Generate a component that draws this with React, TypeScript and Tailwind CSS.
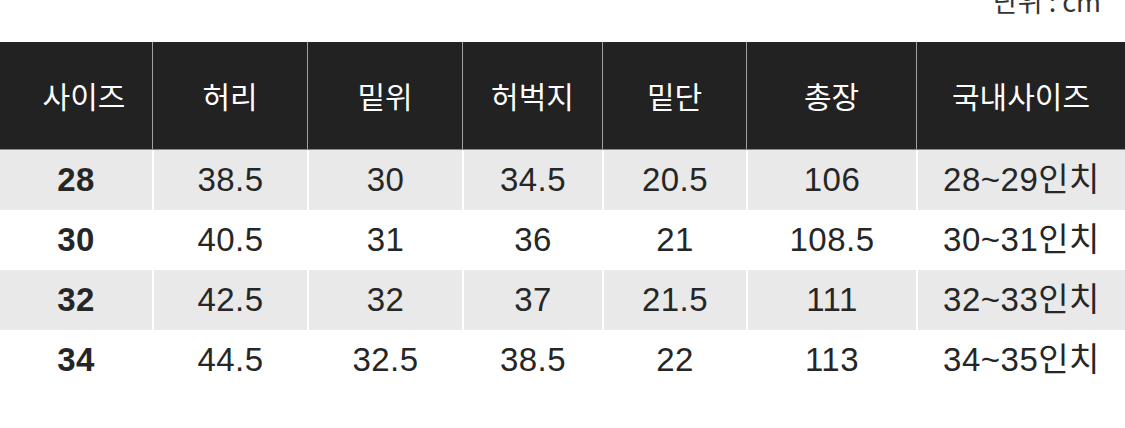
import React from "react";

const headers = ["사이즈", "허리", "밑위", "허벅지", "밑단", "총장", "국내사이즈"];
const rows = [
  ["28", "38.5", "30", "34.5", "20.5", "106", "28~29인치"],
  ["30", "40.5", "31", "36", "21", "108.5", "30~31인치"],
  ["32", "42.5", "32", "37", "21.5", "111", "32~33인치"],
  ["34", "44.5", "32.5", "38.5", "22", "113", "34~35인치"],
];

const grid = "grid grid-cols-[152px_155px_155px_140px_144px_170px_209px]";

export default function App() {
  return (
    <div
      className="w-[1125px] h-[428px] bg-white overflow-hidden"
      style={{ fontFamily: '"Liberation Sans", "Noto Sans CJK KR", sans-serif' }}
    >
      <div className="h-[42px] overflow-hidden flex justify-end pr-[24px]">
        <span
          className="text-[27px] leading-none text-[#333] -mt-[13px]"
          style={{ fontFamily: '"Noto Sans CJK KR", sans-serif' }}
        >
          단위 : cm
        </span>
      </div>
      <div className={`${grid} h-[108px] bg-[#222222] border-b border-[#8a8a8a]`}>
        {headers.map((h, i) => (
          <div
            key={h}
            className={`flex items-center justify-center text-white text-[30px] ${
              i > 0 ? "border-l border-[#a0a0a0]" : "pl-[16px]"
            }`}
            style={{ fontFamily: '"Noto Sans CJK KR", sans-serif' }}
          >
            {h}
          </div>
        ))}
      </div>
      {rows.map((r, ri) => (
        <div
          key={ri}
          className={`${grid} h-[60px] ${ri % 2 === 0 ? "bg-[#e9e9e9]" : "bg-white"}`}
        >
          {r.map((c, ci) => (
            <div
              key={ci}
              className={`flex items-center justify-center text-[33px] text-[#262626] tracking-[0.5px] ${
                ci === 0 ? "font-bold" : ""
              } ${ci > 0 ? "border-l-2 border-white" : ""}`}
            >
              {c}
            </div>
          ))}
        </div>
      ))}
    </div>
  );
}
